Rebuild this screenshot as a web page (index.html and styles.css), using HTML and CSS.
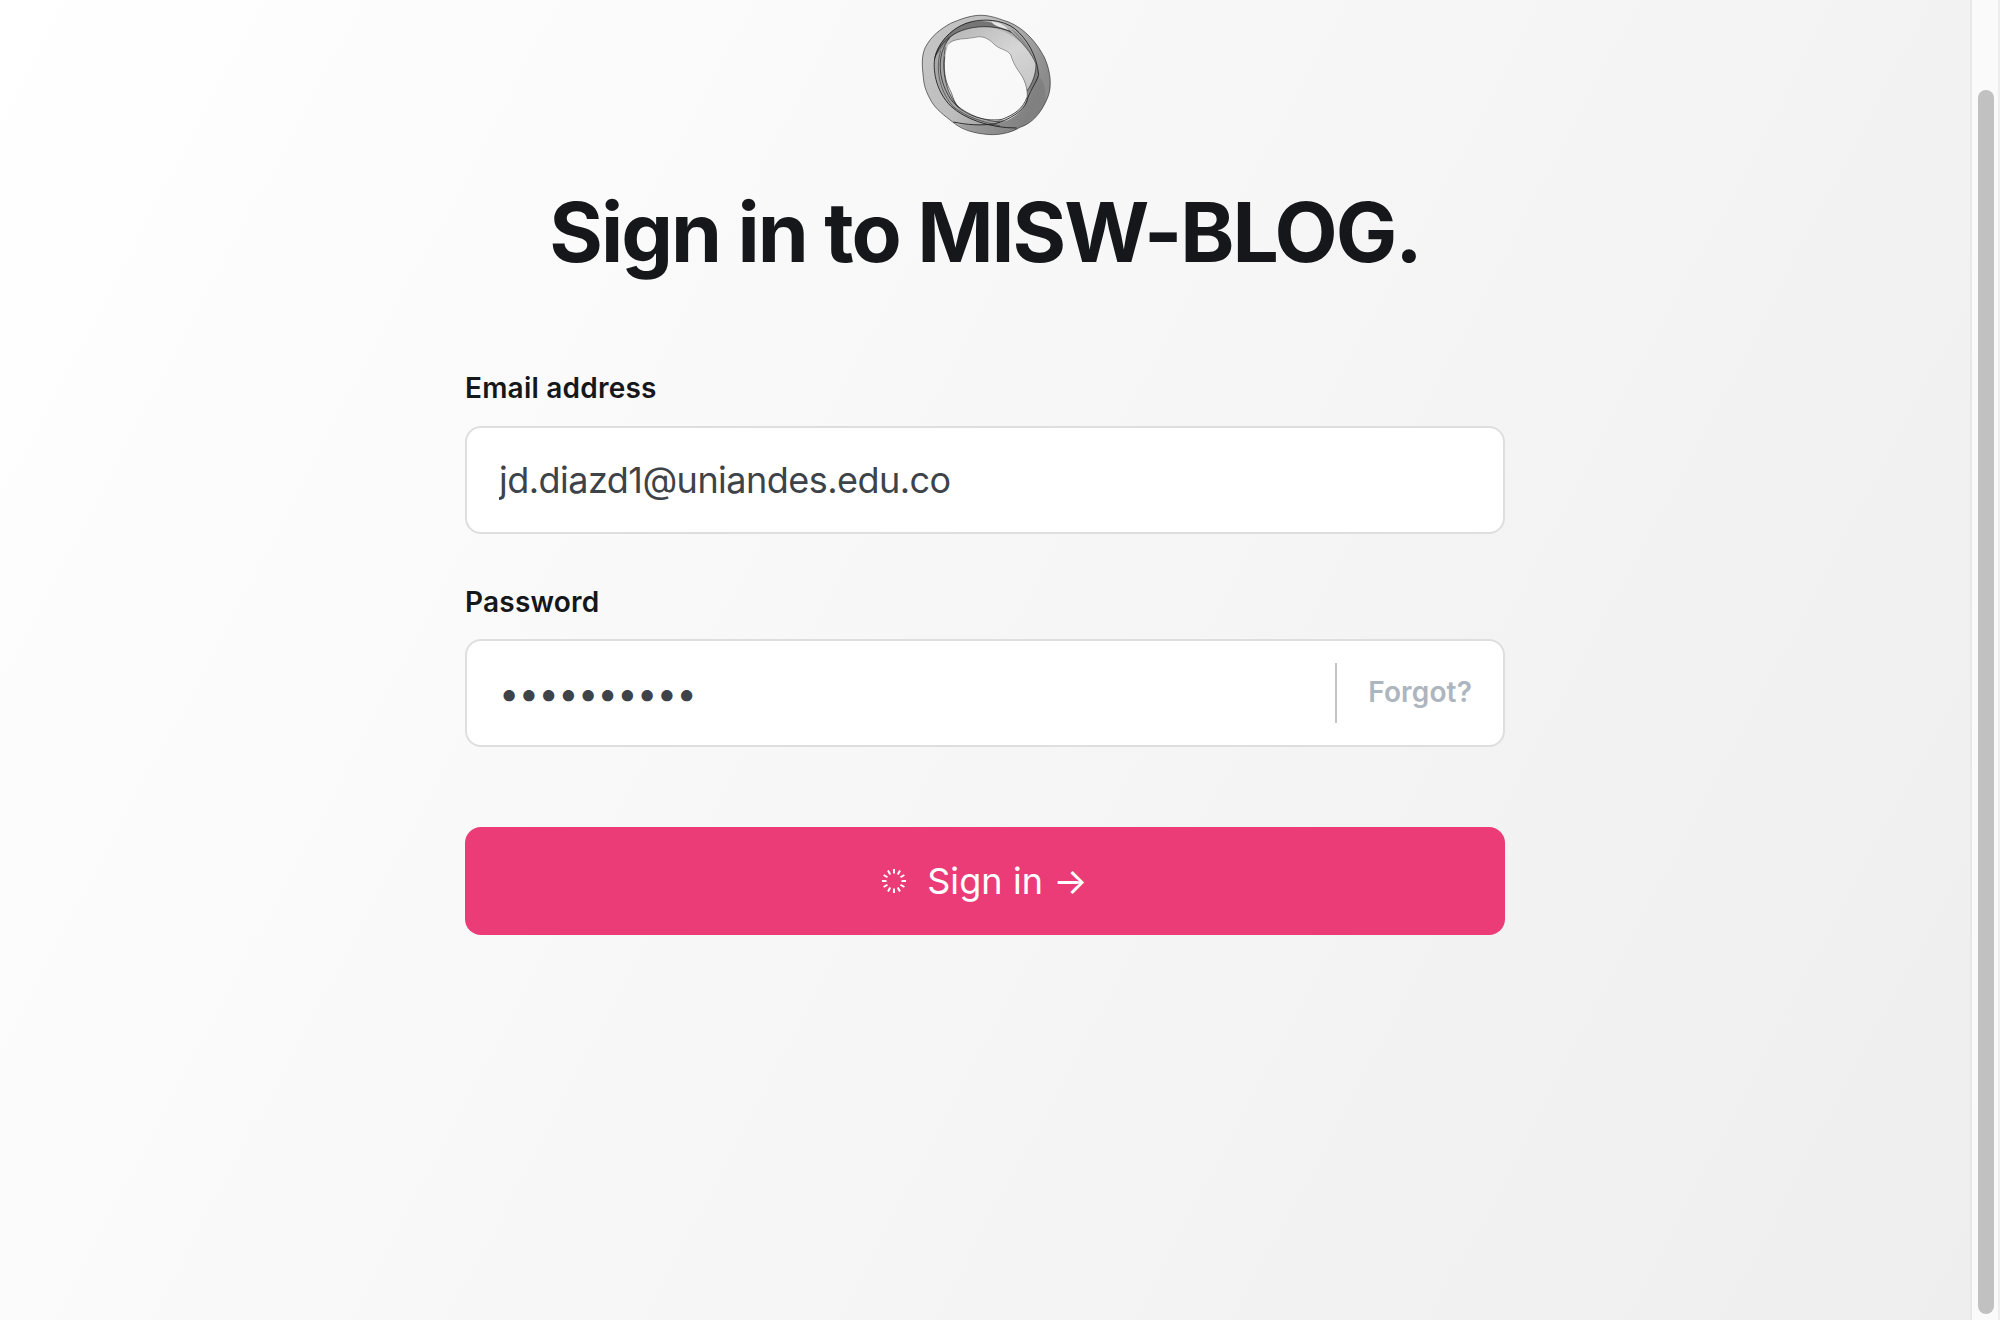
FILE: index.html
```html
<!DOCTYPE html>
<html lang="en">
<head>
<meta charset="utf-8">
<title>Sign in</title>
<link rel="stylesheet" href="styles.css">
</head>
<body>
<main class="page">
  <form class="card">
    <svg class="logo" viewBox="0 0 510 450" aria-hidden="true">
      <defs>
        <linearGradient id="shade" x1="0" y1="0" x2="1" y2="0.4">
          <stop offset="0" stop-color="#c6c6c6"/><stop offset="0.5" stop-color="#bdbdbd"/><stop offset="0.8" stop-color="#a0a0a0"/><stop offset="1" stop-color="#8c8c8c"/>
        </linearGradient>
        <linearGradient id="veil" x1="0" y1="0" x2="1" y2="1">
          <stop offset="0" stop-color="#b4b4b4"/><stop offset="0.55" stop-color="#d6d6d6"/><stop offset="1" stop-color="#c4c4c4"/>
        </linearGradient>
      </defs>
      <path fill="url(#shade)" fill-rule="evenodd" d="M236 46C270 44 300 58 326 66C375 86 412 130 434 174C452 215 456 258 444 290C424 340 396 370 360 382C330 400 290 408 250 402C205 396 180 384 158 366C132 346 108 328 94 304C82 282 72 262 70 232C66 196 64 168 76 142C94 108 120 88 152 70C180 58 206 48 236 46ZM146 132C160 114 200 118 226 112C252 106 268 118 286 136C304 150 320 148 332 164C340 190 350 206 362 222C378 248 384 272 380 300C366 330 330 354 298 360C264 368 224 356 196 340C172 322 166 304 152 280C130 244 130 170 146 132Z"/>
      <path fill="url(#veil)" d="M146 132C160 114 200 118 226 112C252 106 268 118 286 136C304 150 320 148 332 164C340 190 350 206 362 222C372 238 378 256 379 272C396 250 406 220 408 190C380 130 320 80 240 82C200 84 165 96 146 132Z"/>
      <path fill="#dcdcdc" d="M300 358C338 350 366 330 378 304C370 334 340 356 312 364Z"/>
      <path fill="#444" fill-opacity=".6" d="M104 172C112 132 150 88 198 70C240 55 290 64 334 96C276 74 220 76 180 94C140 112 126 150 104 172Z"/>
      <path fill="#666" fill-opacity=".5" d="M330 84C366 106 404 164 416 222C416 240 400 262 383 276C400 240 412 216 406 190C392 148 360 116 330 84Z"/>
      <path fill="#555" fill-opacity=".22" d="M414 228C404 256 386 276 380 300C370 340 330 364 286 372C240 374 206 372 176 374C204 394 250 404 290 402C350 394 400 370 434 310C440 290 436 240 414 228Z"/>
      <path fill="#888" fill-opacity=".45" d="M104 174C112 146 128 128 150 110C120 160 124 240 156 298C180 334 220 354 280 368C210 366 160 334 134 296C108 256 100 218 104 174Z"/>
      <path fill="#e6e6e6" d="M274 66C292 64 310 72 326 90C308 84 286 80 274 66Z"/>
      <g class="strands">
        <path d="M236 46C270 44 300 58 326 66C375 86 412 130 434 174C452 215 456 258 444 290C424 340 396 370 360 382C330 400 290 408 250 402C205 396 180 384 158 366C132 346 108 328 94 304C82 282 72 262 70 232C66 196 64 168 76 142C94 108 120 88 152 70C180 58 206 48 236 46Z" opacity=".7"/>
        <path d="M146 132C160 114 200 118 226 112C252 106 268 118 286 136C304 150 320 148 332 164C340 190 350 206 362 222C374 240 384 264 381 292" opacity=".4"/>
        <path d="M104 176C112 132 150 88 198 70C250 52 310 60 344 86C380 116 410 164 416 224C408 252 386 276 380 306C368 334 330 358 286 371C240 378 200 374 160 366"/>
        <path d="M104 176C98 220 112 278 152 318C196 358 270 384 350 384"/>
        <path d="M104 176C120 122 170 82 250 80C290 80 320 88 334 98" opacity=".8"/>
        <path d="M326 90C360 118 400 164 408 194C408 230 394 254 382 272" opacity=".6"/>
        <path d="M148 114C108 166 114 240 152 298C190 346 250 366 306 358C346 342 368 326 381 292" opacity=".85"/>
        <path d="M136 142C124 206 134 270 170 316C206 346 250 362 300 366" opacity=".75"/>
        <path d="M122 152C104 214 122 280 162 322C200 350 240 364 300 378" opacity=".6"/>
        <path d="M134 170C128 226 142 256 154 278C160 296 164 310 176 322" opacity=".7"/>
      </g>
    </svg>
    <h1 class="title">Sign in to MISW-BLOG.</h1>
    <label class="label" for="email">Email address</label>
    <input class="field" id="email" type="text" value="jd.diazd1@uniandes.edu.co">
    <label class="label label-password" for="password">Password</label>
    <div class="field password">
      <input class="secret" id="password" type="password" value="abcdefghij">
      <a class="forgot">Forgot?</a>
    </div>
    <button class="submit" type="button">
      <svg class="spinner" viewBox="-12 -12 24 24" aria-hidden="true">
        <path d="M0-12V-7.5M0 12V7.5M-12 0H-7.5M12 0H7.5M6-10.4L3.75-6.5M10.4-6L6.5-3.75M10.4 6L6.5 3.75M6 10.4L3.75 6.5M-6 10.4L-3.75 6.5M-10.4 6L-6.5 3.75M-10.4-6L-6.5-3.75M-6-10.4L-3.75-6.5"/>
      </svg>
      <span class="submit-text">Sign in →</span>
    </button>
  </form>
</main>
<aside class="scrollbar"><div class="thumb"></div></aside>
</body>
</html>
```

FILE: styles.css
```css
* { box-sizing: border-box; }
body {
  margin: 0;
  height: 1320px;
  display: flex;
  overflow: hidden;
  font-family: Inter, sans-serif;
  color: #16171b;
}
.page {
  flex: 1;
  display: flex;
  justify-content: center;
  background: linear-gradient(118deg, #fff, #eee);
}
.card {
  width: 1040px;
  display: flex;
  flex-direction: column;
}
.logo {
  width: 170px;
  height: 150px;
  align-self: center;
}
.strands {
  fill: none;
  stroke: #1c1c1c;
  stroke-width: 2.6;
}
.title {
  margin: 33px 0 0;
  height: 100px;
  line-height: 100px;
  text-align: center;
  white-space: nowrap;
  font-size: 82px;
  font-weight: 700;
  letter-spacing: -2px;
}
.label {
  margin-top: 87px;
  height: 36px;
  line-height: 36px;
  font-size: 28px;
  font-weight: 600;
  letter-spacing: 0.22px;
}
.label-password { margin-top: 50px; }
.field {
  margin-top: 20px;
  width: 100%;
  height: 108px;
  padding: 0 32px;
  border: 2px solid #dedede;
  border-radius: 16px;
  background: #fff;
  color: #3d4349;
  font-family: inherit;
  font-size: 36px;
  letter-spacing: -0.53px;
  outline: 0;
}
.password {
  margin-top: 19px;
  padding-right: 31px;
  display: flex;
  align-items: center;
}
.secret {
  flex: 1;
  min-width: 0;
  padding: 0;
  border: 0;
  outline: 0;
  background: none;
  color: inherit;
  font: inherit;
  letter-spacing: inherit;
}
.forgot {
  height: 60px;
  padding-left: 31px;
  border-left: 2px solid #c4c4c4;
  line-height: 58px;
  font-size: 28px;
  font-weight: 600;
  letter-spacing: 0.15px;
  color: #adb5bf;
}
.submit {
  margin-top: 80px;
  height: 108px;
  padding: 0;
  display: flex;
  align-items: center;
  justify-content: center;
  gap: 21px;
  border: 0;
  border-radius: 16px;
  background: #eb3c77;
  color: #fff;
  font-family: inherit;
  font-size: 36px;
  font-weight: 400;
  letter-spacing: 0.1px;
}
.spinner {
  width: 24px;
  height: 24px;
  fill: none;
  stroke: #fff;
  stroke-width: 2;
}
.scrollbar {
  width: 30px;
  padding: 90px 4px 6px 6px;
  display: flex;
  border-left: 2px solid #e8e8e8;
  border-right: 2px solid #ededed;
  background: #fafafa;
}
.thumb {
  width: 16px;
  border-radius: 8px;
  background: #c1c1c1;
}
```
